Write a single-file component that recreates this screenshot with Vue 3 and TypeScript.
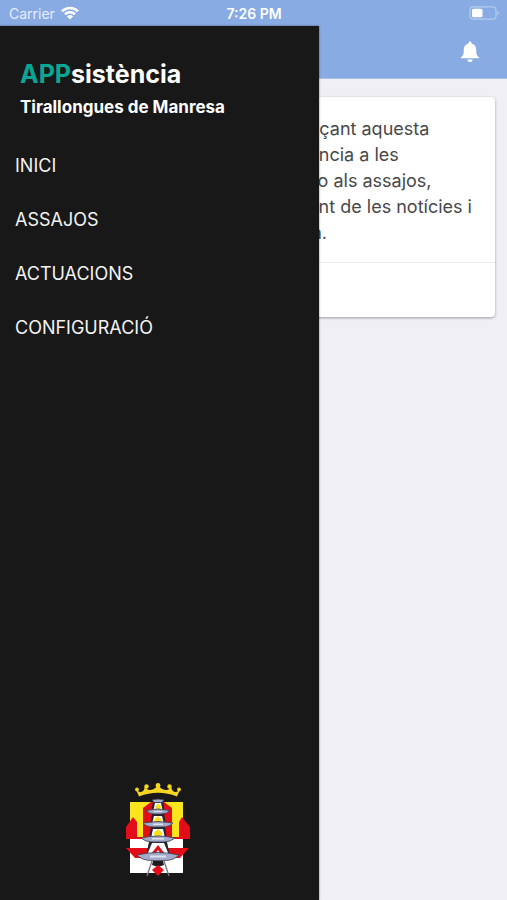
<script setup lang="ts">
interface MenuItem {
  label: string
  href: string
}

const carrier = 'Carrier'
const time = '7:26 PM'
const team = 'Tirallongues de Manresa'

const menu: MenuItem[] = [
  { label: 'INICI', href: '#inici' },
  { label: 'ASSAJOS', href: '#assajos' },
  { label: 'ACTUACIONS', href: '#actuacions' },
  { label: 'CONFIGURACIÓ', href: '#configuracio' },
]

const welcome: string[] = [
  "Benvingut a l'APPsistència · Mitjançant aquesta",
  "aplicació podràs informar l'assistència a les",
  'diferents actuacions de la colla i / o als assajos,',
  "a més, d'estar informat puntualment de les notícies i",
  'els esdeveniments de la seva colla.',
]
</script>

<template>
  <div class="screen">
    <header class="top">
      <div class="status">
        <span class="carrier">
          {{ carrier }}
          <svg class="wifi" viewBox="0 0 18 14" aria-hidden="true">
            <path d="M1 5.2a11.500 11.500 0 0 1 16 0" />
            <path d="M4 8.300a7.200 7.200 0 0 1 10 0" />
            <path class="dot" d="M5.9 10.4a4.5 4.5 0 0 1 6.2 0L9 13.6z" />
          </svg>
        </span>
        <span class="time">{{ time }}</span>
        <span class="power">
          <svg class="battery" viewBox="0 0 30 14" aria-hidden="true">
            <rect class="shell" x="1" y="0.8" width="26" height="12.4" rx="3.5" />
            <rect class="charge" x="3" y="2.8" width="10.5" height="8.4" rx="1.5" />
            <path class="charge tip" d="M28.3 5v4q1.6-.6 1.6-2t-1.6-2z" />
          </svg>
        </span>
      </div>
      <div class="toolbar">
        <button class="bell" type="button" aria-label="Notificacions">
          <svg viewBox="0 0 20 22" aria-hidden="true">
            <path d="M10 .5c.9 0 1.500.6 1.500 1.500v.5c3.300.8 4.700 3.200 4.700 6.200 0 4.300.6 6 2.800 7.500v1H1v-1c2.200-1.500 2.800-3.200 2.800-7.500 0-3 1.400-5.400 4.700-6.200V2C8.500 1.100 9.100.5 10 .5z" />
            <path d="M7.400 18.400h5.200c-.1 1.700-1.100 2.600-2.600 2.600s-2.500-.9-2.600-2.600z" />
          </svg>
        </button>
      </div>
    </header>

    <main class="content">
      <article class="card">
        <p class="message">
          <span v-for="line in welcome" :key="line" class="line">{{ line }}</span>
        </p>
        <div class="card-foot"></div>
      </article>
    </main>

    <aside class="drawer">
      <div class="brand">
        <h1 class="logo"><span class="accent">APP</span>sistència</h1>
        <p class="team">{{ team }}</p>
      </div>
      <nav class="menu">
        <a v-for="item in menu" :key="item.href" class="item" :href="item.href">{{ item.label }}</a>
      </nav>
      <svg class="crest" viewBox="0 0 70 94" role="img" aria-label="Escut">
        <!-- crown -->
        <path fill="#f5d522" d="M14 13.500 11 6.500q3 3 5 2.500 3-.5 4-5.500 2 4 5.500 3.500Q30 6.500 33 2q3 4.500 7.500 5 3.500.5 5.500-3.500 1 5 4 5.500 2 .5 5-2.500l-3 7Q33 6 14 13.500z" />
        <g fill="#f5d522">
          <circle cx="12" cy="6.500" r="1.900" /><circle cx="21.500" cy="3.500" r="2.200" />
          <circle cx="33" cy="2.500" r="2.400" /><circle cx="44.500" cy="3.500" r="2.200" /><circle cx="54" cy="6.500" r="1.900" />
        </g>
        <!-- field -->
        <path fill="#fbe51e" d="M5 19h53v35H5z" />
        <path fill="#fff" d="M5 54h53v36H5z" />
        <!-- red towers and wall -->
        <path fill="#e20d18" d="M18 25l8-6h13l8 6v31H18zM1 44l7-10 4 5v15h6v2H1zM65 44l-8-10-3 5v15h-7v2h18z" />
        <path fill="#e20d18" d="M1 65h63l-9 10H10z" />
        <!-- stacked storeys -->
        <path fill="#25252d" d="M28 18h10l2 12H26zM27 31h12l2 11H25zM26 44h14l2 12H24zM24 59h18l3 14H21z" />
        <path fill="#fff" d="M30 20h6l2 9H28zM29 33h8l2 8H27zM28 46h10l2 9H26zM27 60h12l5 12H22z" />
        <path fill="#fbdf1e" d="M33 20.500l3 3-1 4.500h-4l-1-4.500zM33 33l4 4-2 4h-4l-2-4zM33 46l4.500 4-2 5h-5l-2-5z" />
        <path fill="#e20d18" d="M33 62l7 9h-4l-3-4-3 4h-4z" />
        <g fill="#a3abcc" stroke="#3b3b4a" stroke-width=".8">
          <path d="M27 17q6-2 12 0l-2 2.500h-8z" />
          <path d="M21 27.500q12-3 24 0-3 3.500-9 3.500h-6q-6 0-9-3.500z" />
          <path d="M18 40q15-3 30 0-3 4-11 4h-8q-8 0-11-4z" />
          <path d="M16 55q17-4 34 0-4 4-12 4H28q-8 0-12-4z" />
          <path d="M12 72q21-5 42 0-5 5.500-15 5.500H27q-10 0-15-5.500z" />
        </g>
        <path fill="#dfe2ee" d="M29 28h8v1h-8zM28 40.500h10v1.500H28zM27 55h12v1.500H27zM25 72.500h16v2H25z" />
        <path fill="#1c1c20" d="M28 78h10l1 4-6 2-6-2z" />
        <path fill="none" stroke="#77777f" stroke-width="1.300" d="M27 78l-5 15M39 78l5 15" />
        <path fill="#e20d18" d="M33 82l6 5-6 6-6-6z" />
      </svg>
    </aside>
  </div>
</template>

<style>
body {
  margin: 0;
  background: #efeff4;
}
</style>

<style scoped>
.screen {
  position: relative;
  display: flex;
  flex-direction: column;
  min-height: 100vh;
  overflow: hidden;
  background: #efeff4;
  font-family: Inter, "Liberation Sans", sans-serif;
}

.top {
  background: #88abe3;
  border-bottom: 1px solid #a9c0e6;
}

.status {
  display: grid;
  grid-template-columns: 1fr auto 1fr;
  align-items: center;
  height: 26px;
  padding: 0 8px 0 9px;
  color: #fff;
  font-size: 14px;
}

.carrier {
  display: flex;
  align-items: center;
  gap: 6px;
  color: #e6eefb;
}

.wifi {
  width: 18px;
  height: 14px;
  fill: none;
  stroke: #fff;
  stroke-width: 2.6;
}

.wifi .dot {
  fill: #fff;
  stroke: none;
}

.time {
  font-weight: 600;
}

.power {
  display: flex;
  justify-content: flex-end;
}

.battery {
  width: 30px;
  height: 14px;
}

.shell {
  fill: none;
  stroke: #b5cbee;
  stroke-width: 1.2;
}

.charge {
  fill: #fff;
}

.tip {
  fill: #b5cbee;
}

.toolbar {
  display: flex;
  align-items: center;
  justify-content: flex-end;
  height: 52px;
  padding-right: 27px;
}

.bell {
  display: flex;
  padding: 0;
  border: 0;
  background: none;
}

.bell svg {
  width: 20px;
  height: 22px;
  fill: #fff;
}

.content {
  padding: 18px 12px;
}

.card {
  border-radius: 4px;
  background: #fff;
  box-shadow: 0 1px 3px rgba(0, 0, 0, 0.35);
}

.message {
  margin: 0;
  padding: 19px 16px 16px;
  border-bottom: 1px solid #ececee;
  color: #48484a;
  font-size: 18px;
  line-height: 26px;
}

.line {
  display: block;
  white-space: nowrap;
}

.card-foot {
  height: 54px;
}

.drawer {
  position: absolute;
  top: 26px;
  bottom: 0;
  left: 0;
  display: flex;
  flex-direction: column;
  box-sizing: border-box;
  width: 63%;
  padding-bottom: 23px;
  background: #181818;
  box-shadow: 0 0 2px rgba(0, 0, 0, 0.5);
  color: #f2f2f2;
}

.brand {
  padding: 32px 20px 19px;
}

.logo {
  margin: 0;
  color: #fff;
  font-size: 25px;
  font-weight: 700;
  line-height: 32px;
}

.accent {
  color: #0aa695;
}

.team {
  margin: 4px 0 0;
  color: #fff;
  font-size: 17px;
  font-weight: 700;
  line-height: 26px;
}

.menu {
  display: flex;
  flex-direction: column;
}

.item {
  padding: 0 15px;
  color: #f2f2f2;
  font-size: 18px;
  line-height: 54px;
  text-decoration: none;
}

.crest {
  width: 70px;
  height: 94px;
  margin: auto auto 0;
}
</style>
